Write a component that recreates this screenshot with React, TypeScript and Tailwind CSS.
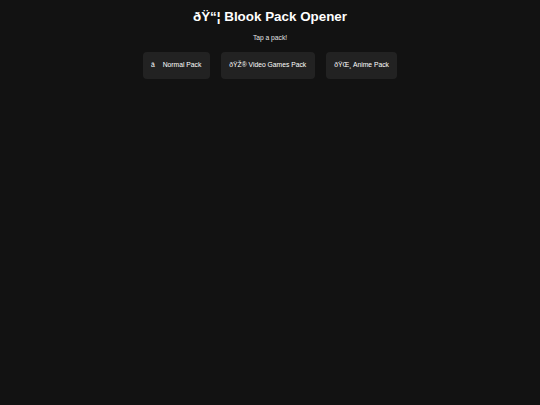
const packs = [
  { id: 'normal', label: 'â\u00AD\u0090 Normal Pack' },
  { id: 'games', label: 'ðŸŽ® Video Games Pack' },
  { id: 'anime', label: 'ðŸŒ¸ Anime Pack' },
]

export default function App() {
  return (
    <div
      className="min-h-screen w-full bg-[#121212] text-white flex flex-col items-center pt-[9px]"
      style={{ fontFamily: '"Liberation Sans", Arial, sans-serif' }}
    >
      <h1 className="text-[13.4px] leading-[16px] font-bold">ðŸ“¦ Blook Pack Opener</h1>
      <p className="mt-[9px] text-[6.7px] leading-[8px] text-[#e5e5e5]">Tap a pack!</p>

      <div className="mt-[10px] flex gap-[11px]">
        {packs.map((p) => (
          <button
            key={p.id}
            className="h-[27px] px-[8.5px] flex items-center rounded-[4px] bg-[#222222] text-[6.75px] text-white whitespace-pre"
          >
            {p.label}
          </button>
        ))}
      </div>
    </div>
  )
}
